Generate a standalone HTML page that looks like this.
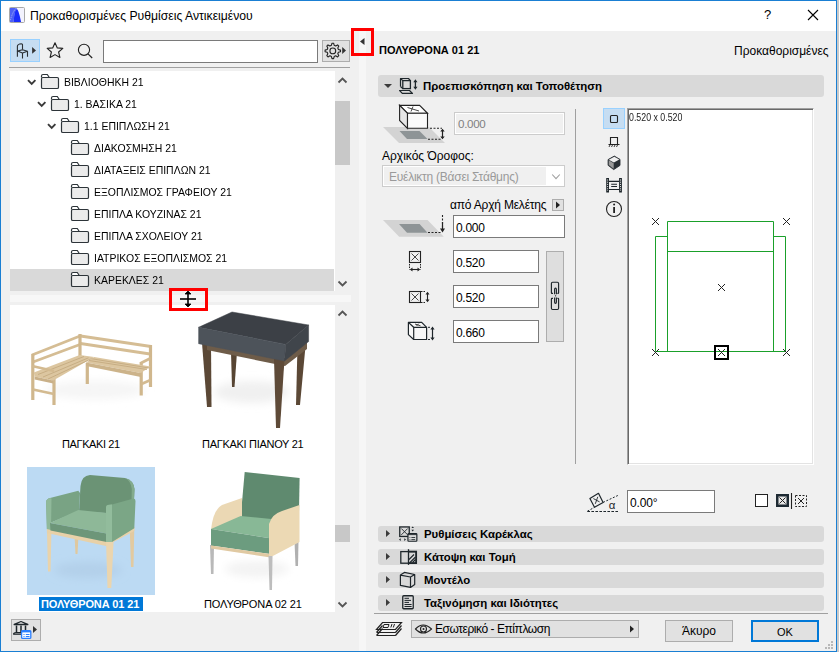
<!DOCTYPE html>
<html><head><meta charset="utf-8">
<style>
html,body{margin:0;padding:0}
body{width:839px;height:652px;position:relative;overflow:hidden;background:#c9c9c9;font-family:"Liberation Sans",sans-serif;color:#000}
.a{position:absolute}
.t{position:absolute;white-space:nowrap;font-size:12px;line-height:14px}
#win{position:absolute;left:0;top:0;width:837px;height:652px;box-sizing:border-box;border:1px solid #1a7fd3;background:#f0f0f0}
#title{position:absolute;left:1px;top:1px;width:835px;height:30px;background:#fff}
.tt{font-size:11px;transform:scaleX(0.95);transform-origin:0 0}
.lbl{font-size:11px;letter-spacing:-0.3px}
.hb{font-weight:bold;font-size:11.4px}
.num{letter-spacing:-0.3px}
.sel{background:#d9d9d9}
.fld{position:absolute;box-sizing:border-box;border:1px solid #7a7a7a;background:#fff}
.hdr{position:absolute;left:378px;width:446px;background:#d9d9d9;border-radius:3px}
.hdr .t{font-weight:bold;font-size:11px}
</style></head><body>
<div id="win"></div>
<div id="title"></div>
<!-- app icon -->
<svg class="a" style="left:9px;top:7px" width="16" height="16" viewBox="0 0 16 16">
  <rect x="0.5" y="0.5" width="15" height="15" rx="1" fill="#f3f3fe" stroke="#a9a9a9"/>
  <path d="M1 1H8Q5.5 4 4.6 15H1Z" fill="#4d60f5"/>
  <path d="M4.6 15Q5.5 2 7.9 2.1Q9.5 2.3 12.1 15Z" fill="#1a2dfb"/>
  <path d="M6.9 1.3Q3 6 1.2 14" fill="none" stroke="#a7b1f8" stroke-width="0.9" stroke-dasharray="1.2 0.8"/>
</svg>
<div class="t" style="left:30px;top:9px;font-size:12.2px;color:#000">Προκαθορισμένες Ρυθμίσεις Αντικειμένου</div>
<div class="t" style="left:764px;top:8px;font-size:13px">?</div>
<svg class="a" style="left:807px;top:9px" width="12" height="12" viewBox="0 0 12 12"><path d="M1 1L11 11M11 1L1 11" stroke="#000" stroke-width="1.1"/></svg>

<!-- LEFT TOOLBAR -->
<div class="a" style="left:10px;top:39px;width:30px;height:23px;box-sizing:border-box;background:#c6ddf2;border:1px solid #99d1ff"></div>
<svg class="a" style="left:14px;top:41px" width="26" height="20" viewBox="0 0 26 20">
 <path d="M3.4 15.7V5.1Q3.6 3 7.4 2.7Q8.5 2.8 8.5 3.6V8.6" fill="none" stroke="#2a2f33" stroke-width="1.1"/>
 <path d="M3.4 10.1L8.5 8.8L13.5 10.3L8.5 12Z" fill="none" stroke="#2a2f33" stroke-width="1.1" stroke-linejoin="round"/>
 <path d="M8.5 12V17.6M13.5 10.3V15.7" fill="none" stroke="#2a2f33" stroke-width="1.1"/>
 <path d="M18.1 6.1V12.8L22 9.5Z" fill="#333"/>
</svg>
<svg class="a" style="left:45px;top:41px" width="20" height="19" viewBox="0 0 20 19">
 <path d="M10 1.8L12.3 6.9L17.8 7.4L13.6 11L14.9 16.5L10 13.6L5.1 16.5L6.4 11L2.2 7.4L7.7 6.9Z" fill="none" stroke="#222" stroke-width="1.1" stroke-linejoin="round"/>
</svg>
<svg class="a" style="left:74px;top:40px" width="22" height="20" viewBox="0 0 22 20">
 <circle cx="10" cy="9.8" r="5.6" fill="none" stroke="#222" stroke-width="1.1"/>
 <path d="M14 13.8L18.2 18" stroke="#222" stroke-width="1.2"/>
</svg>
<div class="fld" style="left:103px;top:40px;width:215px;height:23px"></div>
<div class="a" style="left:322px;top:40px;width:28px;height:22px;box-sizing:border-box;background:#e1e1e1;border:1px solid #adadad"></div>
<svg class="a" style="left:322px;top:40px" width="28" height="22" viewBox="0 0 28 22">
 <path d="M10 3.2L11.6 3.2L12.2 5.3L13.7 6L15.6 4.9L16.8 6.1L15.8 8L16.4 9.5L18.5 10.1V11.7L16.4 12.3L15.8 13.8L16.8 15.7L15.6 16.9L13.7 15.8L12.2 16.5L11.6 18.6H10L9.4 16.5L7.9 15.8L6 16.9L4.8 15.7L5.8 13.8L5.2 12.3L3.1 11.7V10.1L5.2 9.5L5.8 8L4.8 6.1L6 4.9L7.9 6L9.4 5.3Z" fill="none" stroke="#222" stroke-width="1.1" stroke-linejoin="round"/>
 <circle cx="10.8" cy="10.9" r="2.9" fill="none" stroke="#222" stroke-width="1.1"/>
 <path d="M20.2 7V14L24 10.5Z" fill="#333"/>
</svg>
<div class="a" style="left:9px;top:67px;width:341px;height:1px;background:#a0a0a0"></div>
<!-- splitter stripe -->
<div class="a" style="left:359px;top:31px;width:7px;height:620px;background:#f6f6f6"></div>
<!-- red box top -->
<div class="a" style="left:351px;top:28px;width:23px;height:28px;box-sizing:border-box;border:3px solid #ff0000"></div>
<svg class="a" style="left:358px;top:36px" width="8" height="11" viewBox="0 0 8 11"><path d="M6.5 2V9L2 5.5Z" fill="#333"/></svg>
<div class="a" style="left:10px;top:71px;width:325px;height:220px;background:#fff"></div>
<div class="a sel" style="left:10px;top:269px;width:324px;height:22px"></div>
<svg class="a" style="left:27px;top:79px" width="10" height="7" viewBox="0 0 10 7"><path d="M1 1.2L4.7 4.9L8.4 1.2" fill="none" stroke="#3a3a3a" stroke-width="1.9"/></svg>
<svg class="a" style="left:40px;top:73px" width="20" height="17" viewBox="0 0 20 17"><path d="M1.5 4.5V3Q1.5 1.5 3 1.5H7.3L9.3 4.5" fill="#fff" stroke="#2d3439" stroke-width="1.2"/><rect x="1.5" y="4.5" width="17" height="11" rx="1.3" fill="#ebebeb" stroke="#2d3439" stroke-width="1.2"/></svg>
<div class="t tt" style="left:64px;top:75px">ΒΙΒΛΙΟΘΗΚΗ 21</div>
<svg class="a" style="left:37px;top:101px" width="10" height="7" viewBox="0 0 10 7"><path d="M1 1.2L4.7 4.9L8.4 1.2" fill="none" stroke="#3a3a3a" stroke-width="1.9"/></svg>
<svg class="a" style="left:50px;top:95px" width="20" height="17" viewBox="0 0 20 17"><path d="M1.5 4.5V3Q1.5 1.5 3 1.5H7.3L9.3 4.5" fill="#fff" stroke="#2d3439" stroke-width="1.2"/><rect x="1.5" y="4.5" width="17" height="11" rx="1.3" fill="#ebebeb" stroke="#2d3439" stroke-width="1.2"/></svg>
<div class="t tt" style="left:74px;top:97px">1. ΒΑΣΙΚΑ 21</div>
<svg class="a" style="left:47px;top:123px" width="10" height="7" viewBox="0 0 10 7"><path d="M1 1.2L4.7 4.9L8.4 1.2" fill="none" stroke="#3a3a3a" stroke-width="1.9"/></svg>
<svg class="a" style="left:60px;top:117px" width="20" height="17" viewBox="0 0 20 17"><path d="M1.5 4.5V3Q1.5 1.5 3 1.5H7.3L9.3 4.5" fill="#fff" stroke="#2d3439" stroke-width="1.2"/><rect x="1.5" y="4.5" width="17" height="11" rx="1.3" fill="#ebebeb" stroke="#2d3439" stroke-width="1.2"/></svg>
<div class="t tt" style="left:84px;top:119px">1.1 ΕΠΙΠΛΩΣΗ 21</div>
<svg class="a" style="left:70px;top:139px" width="20" height="17" viewBox="0 0 20 17"><path d="M1.5 4.5V3Q1.5 1.5 3 1.5H7.3L9.3 4.5" fill="#fff" stroke="#2d3439" stroke-width="1.2"/><rect x="1.5" y="4.5" width="17" height="11" rx="1.3" fill="#ebebeb" stroke="#2d3439" stroke-width="1.2"/></svg>
<div class="t tt" style="left:94px;top:141px">ΔΙΑΚΟΣΜΗΣΗ 21</div>
<svg class="a" style="left:70px;top:161px" width="20" height="17" viewBox="0 0 20 17"><path d="M1.5 4.5V3Q1.5 1.5 3 1.5H7.3L9.3 4.5" fill="#fff" stroke="#2d3439" stroke-width="1.2"/><rect x="1.5" y="4.5" width="17" height="11" rx="1.3" fill="#ebebeb" stroke="#2d3439" stroke-width="1.2"/></svg>
<div class="t tt" style="left:94px;top:163px">ΔΙΑΤΑΞΕΙΣ ΕΠΙΠΛΩΝ 21</div>
<svg class="a" style="left:70px;top:183px" width="20" height="17" viewBox="0 0 20 17"><path d="M1.5 4.5V3Q1.5 1.5 3 1.5H7.3L9.3 4.5" fill="#fff" stroke="#2d3439" stroke-width="1.2"/><rect x="1.5" y="4.5" width="17" height="11" rx="1.3" fill="#ebebeb" stroke="#2d3439" stroke-width="1.2"/></svg>
<div class="t tt" style="left:94px;top:185px">ΕΞΟΠΛΙΣΜΟΣ ΓΡΑΦΕΙΟΥ 21</div>
<svg class="a" style="left:70px;top:205px" width="20" height="17" viewBox="0 0 20 17"><path d="M1.5 4.5V3Q1.5 1.5 3 1.5H7.3L9.3 4.5" fill="#fff" stroke="#2d3439" stroke-width="1.2"/><rect x="1.5" y="4.5" width="17" height="11" rx="1.3" fill="#ebebeb" stroke="#2d3439" stroke-width="1.2"/></svg>
<div class="t tt" style="left:94px;top:207px">ΕΠΙΠΛΑ ΚΟΥΖΙΝΑΣ 21</div>
<svg class="a" style="left:70px;top:227px" width="20" height="17" viewBox="0 0 20 17"><path d="M1.5 4.5V3Q1.5 1.5 3 1.5H7.3L9.3 4.5" fill="#fff" stroke="#2d3439" stroke-width="1.2"/><rect x="1.5" y="4.5" width="17" height="11" rx="1.3" fill="#ebebeb" stroke="#2d3439" stroke-width="1.2"/></svg>
<div class="t tt" style="left:94px;top:229px">ΕΠΙΠΛΑ ΣΧΟΛΕΙΟΥ 21</div>
<svg class="a" style="left:70px;top:249px" width="20" height="17" viewBox="0 0 20 17"><path d="M1.5 4.5V3Q1.5 1.5 3 1.5H7.3L9.3 4.5" fill="#fff" stroke="#2d3439" stroke-width="1.2"/><rect x="1.5" y="4.5" width="17" height="11" rx="1.3" fill="#ebebeb" stroke="#2d3439" stroke-width="1.2"/></svg>
<div class="t tt" style="left:94px;top:251px">ΙΑΤΡΙΚΟΣ ΕΞΟΠΛΙΣΜΟΣ 21</div>
<svg class="a" style="left:70px;top:271px" width="20" height="17" viewBox="0 0 20 17"><path d="M1.5 4.5V3Q1.5 1.5 3 1.5H7.3L9.3 4.5" fill="#fff" stroke="#2d3439" stroke-width="1.2"/><rect x="1.5" y="4.5" width="17" height="11" rx="1.3" fill="#ebebeb" stroke="#2d3439" stroke-width="1.2"/></svg>
<div class="t tt" style="left:94px;top:273px">ΚΑΡΕΚΛΕΣ 21</div><!-- tree scrollbar -->
<div class="a" style="left:335px;top:101px;width:15px;height:64px;background:#c8c8c8"></div>
<svg class="a" style="left:337px;top:76px" width="11" height="9" viewBox="0 0 11 9"><path d="M1.5 6.5L5.5 2.5L9.5 6.5" fill="none" stroke="#555" stroke-width="1.8"/></svg>
<svg class="a" style="left:337px;top:279px" width="11" height="9" viewBox="0 0 11 9"><path d="M1.5 2.5L5.5 6.5L9.5 2.5" fill="none" stroke="#555" stroke-width="1.8"/></svg>
<!-- splitter -->
<div class="a" style="left:10px;top:295px;width:341px;height:7px;background:#f7f7f7"></div>
<!-- image area -->
<div class="a" style="left:10px;top:305px;width:325px;height:307px;background:#fff"></div>
<div class="a" style="left:335px;top:525px;width:15px;height:17px;background:#c8c8c8"></div>
<svg class="a" style="left:337px;top:309px" width="11" height="9" viewBox="0 0 11 9"><path d="M1.5 6.5L5.5 2.5L9.5 6.5" fill="none" stroke="#555" stroke-width="1.8"/></svg>
<svg class="a" style="left:337px;top:600px" width="11" height="9" viewBox="0 0 11 9"><path d="M1.5 2.5L5.5 6.5L9.5 2.5" fill="none" stroke="#555" stroke-width="1.8"/></svg>
<!-- red box splitter -->
<div class="a" style="left:169px;top:288px;width:39px;height:23px;box-sizing:border-box;border:3px solid #ff0000"></div>
<svg class="a" style="left:178px;top:289px" width="20" height="20" viewBox="0 0 20 20">
 <path d="M2 10H18" stroke="#000" stroke-width="1.6"/>
 <path d="M10 4V16" stroke="#000" stroke-width="1.6"/>
 <path d="M7 5L10 2L13 5Z M7 15L10 18L13 15Z" fill="#000" stroke="#000" stroke-width="0.8"/>
</svg>
<!-- selected image bg -->
<div class="a" style="left:27px;top:467px;width:128px;height:128px;background:#bcdaf3"></div>
<!-- labels -->
<div class="t lbl" style="left:62px;top:437px;letter-spacing:-0.4px">ΠΑΓΚΑΚΙ 21</div>
<div class="t lbl" style="left:202px;top:437px">ΠΑΓΚΑΚΙ ΠΙΑΝΟΥ 21</div>
<div class="a" style="left:39px;top:597px;width:104px;height:14px;background:#0078d7"></div>
<div class="t lbl" style="left:41px;top:597px;color:#fff;font-weight:bold;letter-spacing:-0.15px">ΠΟΛΥΘΡΟΝΑ 01 21</div>
<div class="t lbl" style="left:204px;top:597px;letter-spacing:-0.1px">ΠΟΛΥΘΡΟΝΑ 02 21</div>
<!-- library button -->
<div class="a" style="left:11px;top:619px;width:30px;height:22px;box-sizing:border-box;background:#e1e1e1;border:1px solid #adadad"></div>
<svg class="a" style="left:11px;top:619px" width="30" height="22" viewBox="0 0 30 22">
 <path d="M3.3 5.4L10 2.5L16.7 5.4Z" fill="#f0f0f0" stroke="#1e262b" stroke-width="1.2" stroke-linejoin="round"/>
 <path d="M2.8 5.6H17.2" stroke="#1e262b" stroke-width="1.3"/>
 <path d="M5.5 6.5V13.2M10 6.5V13.2M14.5 6.5V11" stroke="#1e262b" stroke-width="1.5"/>
 <path d="M2.5 15.1Q3 13.6 5 13.6H11" fill="none" stroke="#1e262b" stroke-width="1.4"/>
 <path d="M2.2 15.2H11" stroke="#1e262b" stroke-width="1.2"/>
 <rect x="10.6" y="11.6" width="9.2" height="7.8" rx="1" fill="#fff" stroke="#2a7fff" stroke-width="1.3"/>
 <path d="M10.5 12.6H19.9" stroke="#2a7fff" stroke-width="1.6"/>
 <path d="M12.5 15.5H13.5M14.8 15.5H18.5M12.5 17.5H13.5M14.8 17.5H18.5" stroke="#2a7fff" stroke-width="1.2"/>
 <path d="M22 7V13.9L26 10.5Z" fill="#333"/>
</svg>
<svg class="a" style="left:10px;top:305px" width="325" height="307" viewBox="10 305 325 307">
 <!-- bench -->
 <defs><filter id="blur" x="-50%" y="-50%" width="200%" height="200%"><feGaussianBlur stdDeviation="4"/></filter></defs>
 <g>
  <ellipse cx="95" cy="390" rx="50" ry="9" fill="#f5f5f5" filter="url(#blur)"/>
  <path d="M32 355L80 336M33 362L80 344.5M80.5 336L151 346.5M80.5 343.5L150 354" stroke="#d5bd94" stroke-width="2.8"/>
  <path d="M32.8 354V400M80 334V357M87.3 363V384M150.5 345V387M141.2 362V395.5M54 370V405" stroke="#d0b78d" stroke-width="3.2"/>
  <path d="M33.8 372.5L79.7 355L94.2 357L53.2 380.5L34.7 376.5Z" fill="#dcc6a0"/>
  <path d="M34.7 376.5L53.2 380.5L53.2 383.5L34.7 379.5Z" fill="#c9b088"/>
  <path d="M86.1 362.5L94.2 357L150.5 366.5L140.8 373Z" fill="#dcc6a0"/>
  <path d="M86.1 362.5L140.8 373L140.8 377L86.1 366Z" fill="#ccb38a"/>
  <path d="M38 374.5L84 356.5M43 377L88.5 357.8M48 379L92 358.5M89 360.5L147 369.5M92 358.8L149 368" stroke="#c2a77c" stroke-width="0.8"/>
  <path d="M32 366L54 371M141 363L151 358M33 389.5L54 394M141.5 384L150.5 380" stroke="#d3ba90" stroke-width="2.8"/>
 </g>
 <!-- piano stool -->
 <g>
  <ellipse cx="252" cy="392" rx="38" ry="11" fill="#f0f0f0" filter="url(#blur)"/>
  <path d="M202 343L211 343L211.5 407L207 407Z" fill="#5b4836"/>
  <path d="M231 352L237 352L234.5 387L232 387Z" fill="#574533"/>
  <path d="M297.5 346L305.5 346L300 405L296 405Z" fill="#5b4836"/>
  <path d="M207 343L285 358L307 342L307 349L285 366L207 350Z" fill="#6e5c49"/>
  <path d="M274 359L284.5 359L280 428L276 428Z" fill="#5e4a38"/>
  <path d="M198.6 327.3L232 312L308.6 325L285.7 344.4Z" fill="#3c4046" stroke="#3c4046" stroke-width="0.5"/>
  <path d="M198.6 327.3L285.7 344.4L284.5 361L198.6 343.7Z" fill="#4d535a" stroke="#4d535a" stroke-width="0.5"/>
  <path d="M285.7 344.4L308.6 325L308.6 341.6L284.5 361Z" fill="#40454b" stroke="#40454b" stroke-width="0.5"/>
 </g>
 <!-- armchair 1 -->
 <g>
  <ellipse cx="88" cy="570" rx="34" ry="8" fill="#b3d0ea" filter="url(#blur)"/>
  <path d="M46.9 529L51.5 529L50.5 571.5L48 571.5Z" fill="#e9d3ab"/>
  <path d="M74.5 535L78.5 535L77.5 554L75.5 554Z" fill="#dfc89f"/>
  <path d="M129.7 527L134.3 527L133.5 567L131 567Z" fill="#e2caa0"/>
  <path d="M46.9 528.5L106 541L134.3 527L134.3 531L106 546L46.9 533Z" fill="#e8d1a8"/>
  <path d="M106 541L113.6 541L111.3 588L107.5 588Z" fill="#ebd5ae"/>
  <path d="M79 512L80.5 486Q81.5 475.5 90 475L125 478Q133.5 480 134.5 489L134 500L106 513Z" fill="#6b9375"/>
  <path d="M125 478Q133.5 480 134.5 489L134 500L131.5 500L131.8 489Q131 481 125 478Z" fill="#83ab8c"/>
  <path d="M46.1 501.5Q46.5 499 50 498L78.3 490.8L80 493L79 511L50 523L46.9 529Z" fill="#79a384"/>
  <path d="M46.1 501.5Q46.5 499 50 498L51.5 498.5L51 530L46.9 529Z" fill="#90b99a"/>
  <path d="M50 523L78.3 510L107 513L106.5 533.5Z" fill="#8eb898"/>
  <path d="M50 523L106.5 533.5L106.5 542L50.5 530.6Z" fill="#6d9679"/>
  <path d="M106 507Q106.5 504.5 112 504.6L133.6 498.4Q135.5 498.5 135.5 501L134.3 528.3L112 542L106 542Z" fill="#7ba686"/>
  <path d="M106 507Q106.5 504.5 112 504.6L112 542L106 542Z" fill="#92bc9c"/>
 </g>
 <!-- armchair 2 -->
 <g>
  <ellipse cx="257" cy="569" rx="32" ry="8" fill="#f3f3f3" filter="url(#blur)"/>
  <path d="M210 545L214 545L213.5 574L211 574Z" fill="#b9b9b9"/>
  <path d="M294.5 541L298.5 541L298 566L295.5 566Z" fill="#b0b0b0"/>
  <path d="M244.7 472L299.6 478L299 512L276 521L240.6 518Z" fill="#5f8a6f"/>
  <path d="M211 530Q213 510 222 505L242 498L242 517L211 531Z" fill="#ebd8b4"/>
  <path d="M211 529L240.6 516L276.3 519.5L271.5 538.5Z" fill="#88b896"/>
  <path d="M211 529L271.5 538.5L270.3 554L211 545.6Z" fill="#6c9c7f"/>
  <path d="M211 545.6L270.3 554L270.3 557.5L211 548.5Z" fill="#e0c9a2"/>
  <path d="M269 524Q272 514 282 511L299.5 505L299.5 542L269 558Z" fill="#ecd9b4"/>
  <path d="M268.5 556L272.5 556L272 590L269.5 590Z" fill="#bdbdbd"/>
 </g>
</svg>
<!-- RIGHT PANEL -->
<div class="t" style="left:379px;top:43px;font-weight:bold;font-size:11px">ΠΟΛΥΘΡΟΝΑ 01 21</div>
<div class="t" style="left:734px;top:44px;font-size:12px">Προκαθορισμένες</div>
<!-- header 1 -->
<div class="hdr" style="top:75px;height:22px"></div>
<svg class="a" style="left:382px;top:81px" width="12" height="10" viewBox="0 0 12 10"><path d="M2 3H10L6 7Z" fill="#3c3c3c"/></svg>
<svg class="a" style="left:397px;top:76px" width="24" height="20" viewBox="0 0 24 20">
 <path d="M3.5 10.5V2.5H11.5L13.4 4.6" fill="none" stroke="#1e262b" stroke-width="1.2" stroke-linejoin="round"/>
 <path d="M3.5 2.5L5.8 4.6M3.5 10.5L5.8 12.6" stroke="#1e262b" stroke-width="1.2"/>
 <rect x="5.8" y="4.6" width="7.6" height="8" fill="#dadada" stroke="#1e262b" stroke-width="1.3"/>
 <path d="M2.6 14.5H12.5L15.5 17.4H5.3Z" fill="none" stroke="#1e262b" stroke-width="1.2" stroke-linejoin="round"/>
 <path d="M18.4 5V12" stroke="#1e262b" stroke-width="1.3"/>
 <path d="M16.3 6.3L18.4 3.3L20.5 6.3ZM16.3 10.7L18.4 13.7L20.5 10.7Z" fill="#1e262b"/>
</svg>
<div class="t hb" style="left:423px;top:79px">Προεπισκόπηση και Τοποθέτηση</div>
<!-- cube icon top -->
<svg class="a" style="left:380px;top:100px" width="70" height="46" viewBox="0 0 70 46">
 <path d="M3 27H49L65 43H19Z" fill="#d3d3d3"/>
 <path d="M19.5 31H39.5L47.5 39H27Z" fill="#8e9496"/>
 <path d="M19.6 5.4H39.6L47.5 13.3H27.5Z" fill="#fff" stroke="#222" stroke-width="1.1"/>
 <path d="M19.6 5.4V20.4L27.5 28.3V13.3Z" fill="#e6e6e6" stroke="#222" stroke-width="1.1"/>
 <path d="M27.5 13.3H47.5V28.3H27.5Z" fill="#fafafa" stroke="#222" stroke-width="1.1"/>
 <path d="M27.5 7.5L39 11M33 6.5L31 11.5" stroke="#333" stroke-width="0.9"/>
 <path d="M50 28.3H62M48 39.2H62" stroke="#222" stroke-width="1.1" stroke-dasharray="2 1.5"/>
 <path d="M62.5 30V38" stroke="#222" stroke-width="1.2"/>
 <path d="M60.3 31.5L62.5 28.8L64.7 31.5ZM60.3 36.5L62.5 39.2L64.7 36.5Z" fill="#222"/>
</svg>
<div class="a" style="left:454px;top:112px;width:111px;height:23px;box-sizing:border-box;border:1px solid #cccccc;background:#f0f0f0;box-shadow:inset 0 0 0 1px #fff"></div>
<div class="t" style="left:458px;top:117px;color:#808080;font-size:11.6px;letter-spacing:-0.3px">0.000</div>
<div class="t" style="left:382px;top:149px;font-size:12px">Αρχικός Όροφος:</div>
<div class="a" style="left:382px;top:165px;width:183px;height:22px;box-sizing:border-box;border:1px solid #cccccc;background:#fff"></div>
<div class="a" style="left:384px;top:167px;width:162px;height:18px;background:#f0f0f0"></div>
<svg class="a" style="left:551px;top:173px" width="10" height="8" viewBox="0 0 10 8"><path d="M1.2 1.5L5 5.6L8.8 1.5" fill="none" stroke="#a0a0a0" stroke-width="1.1"/></svg>
<div class="t" style="left:389px;top:170px;color:#9a9a9a;font-size:12px;letter-spacing:-0.25px">Ευέλικτη (Βάσει Στάθμης)</div>
<div class="t" style="left:450px;top:198px;font-size:12px;letter-spacing:-0.2px">από Αρχή Μελέτης</div>
<div class="a" style="left:552px;top:199px;width:12px;height:12px;box-sizing:border-box;border:1px solid #adadad;background:#e1e1e1"></div>
<svg class="a" style="left:552px;top:199px" width="12" height="12" viewBox="0 0 12 12"><path d="M4 2.5V9.5L8 6Z" fill="#222"/></svg>
<!-- plane icon -->
<svg class="a" style="left:380px;top:205px" width="70" height="36" viewBox="0 0 70 36">
 <path d="M3 15H47.5L63.8 31.7H19.2Z" fill="#d3d3d3"/>
 <path d="M19 19H39.6L47.5 27.7H27Z" fill="#8e9496"/>
 <path d="M48 27.5H62" stroke="#222" stroke-width="1.1" stroke-dasharray="2 1.5"/>
 <path d="M62.5 10V26" stroke="#222" stroke-width="1.1" stroke-dasharray="2 1.5"/>
 <path d="M62.5 17V25" stroke="#222" stroke-width="1.2"/>
 <path d="M60 23.5L62.5 27.5L65 23.5Z" fill="#222"/>
</svg>
<div class="fld" style="left:453px;top:215px;width:112px;height:23px"></div>
<div class="t num" style="left:456px;top:221px;font-size:12px">0.000</div>
<!-- size fields -->
<div class="fld" style="left:453px;top:250px;width:86px;height:23px"></div>
<div class="t num" style="left:456px;top:256px;font-size:12px">0.520</div>
<div class="fld" style="left:453px;top:285px;width:86px;height:23px"></div>
<div class="t num" style="left:456px;top:291px;font-size:12px">0.520</div>
<div class="fld" style="left:453px;top:320px;width:86px;height:23px"></div>
<div class="t num" style="left:456px;top:326px;font-size:12px">0.660</div>
<div class="a" style="left:546px;top:251px;width:18px;height:91px;box-sizing:border-box;border:1px solid #adadad;background:#dedede"></div>
<svg class="a" style="left:546px;top:281px" width="18" height="32" viewBox="0 0 18 32">
 <g fill="none" stroke="#1e262b" stroke-width="1.15">
 <path d="M7 12.3H5.9Q5.4 12.3 5.4 11.7V2.4Q5.4 1.2 6.6 1.2H11.4Q12.6 1.2 12.6 2.4V11.7Q12.6 12.3 12 12.3H11.4"/>
 <path d="M7 17.4H5.9Q5.4 17.4 5.4 18V27.3Q5.4 28.5 6.6 28.5H11.4Q12.6 28.5 12.6 27.3V18Q12.6 17.4 12 17.4H11.4"/>
 <path d="M8.6 13.2V8.4Q8.6 7.1 9.5 7.1Q10.4 7.1 10.4 8.4V13.2"/>
 <path d="M8.6 16.6V21.1Q8.6 22.4 9.5 22.4Q10.4 22.4 10.4 21.1V16.6"/>
 </g>
 <rect x="9" y="14.3" width="1.1" height="1.1" fill="#1e262b"/>
</svg>
<!-- size icons -->
<svg class="a" style="left:405px;top:248px" width="32" height="96" viewBox="0 0 32 96">
 <rect x="4.5" y="3.5" width="11" height="11" fill="none" stroke="#222" stroke-width="1.1"/>
 <path d="M6.5 5.5L13.5 12.5M13.5 5.5L6.5 12.5" stroke="#333" stroke-width="0.9"/>
 <path d="M4.5 16V21.5M15.5 16V21.5" stroke="#222" stroke-width="1" stroke-dasharray="1.5 1"/>
 <path d="M6 21.5H14" stroke="#222" stroke-width="1.1"/>
 <path d="M7.5 19.5L4.8 21.5L7.5 23.5ZM12.5 19.5L15.2 21.5L12.5 23.5Z" fill="#222"/>
 <rect x="4.5" y="43.5" width="11" height="11" fill="none" stroke="#222" stroke-width="1.1"/>
 <path d="M6.5 45.5L13.5 52.5M13.5 45.5L6.5 52.5" stroke="#333" stroke-width="0.9"/>
 <path d="M16 43.5H21M16 54.5H21" stroke="#222" stroke-width="1" stroke-dasharray="1.5 1"/>
 <path d="M22.5 45V53" stroke="#222" stroke-width="1.1"/>
 <path d="M20.5 46.5L22.5 43.8L24.5 46.5ZM20.5 51.5L22.5 54.2L24.5 51.5Z" fill="#222"/>
 <path d="M3.4 74.4H16.7L21.6 79.3V91.5H8.7L3.4 86.6Z" fill="#f7f7f7" stroke="#1e262b" stroke-width="1.2" stroke-linejoin="round"/>
 <path d="M3.4 74.4L8.7 79.3H21.6M8.7 79.3V91.5" fill="none" stroke="#1e262b" stroke-width="1.2"/>
 <path d="M10 76L15.5 77.8M13.8 75.6L11.5 78" stroke="#333" stroke-width="0.9"/>
 <path d="M23 79.3H25M23 91.5H25" stroke="#1e262b" stroke-width="1"/>
 <path d="M27.5 81V90" stroke="#1e262b" stroke-width="1.2"/>
 <path d="M25.4 81.5L27.5 78.6L29.6 81.5ZM25.4 89.5L27.5 92.4L29.6 89.5Z" fill="#1e262b"/>
</svg>
<!-- vertical separator -->
<div class="a" style="left:575px;top:109px;width:1px;height:355px;background:#a0a0a0"></div>
<!-- icon buttons -->
<div class="a" style="left:603px;top:108px;width:22px;height:21px;box-sizing:border-box;background:#c6ddf2;border:1px solid #99d1ff"></div>
<svg class="a" style="left:603px;top:108px" width="22" height="114" viewBox="0 0 22 114">
 <rect x="7.5" y="7.5" width="7" height="7" rx="1" fill="none" stroke="#222" stroke-width="1.1"/>
 <path d="M7.5 36V29.5H14.5V36M5.5 36.5H16.5" fill="none" stroke="#222" stroke-width="1.1"/>
 <path d="M6 39L7 37M8.5 39L9.5 37M11 39L12 37M13.5 39L14.5 37" stroke="#222" stroke-width="0.9"/>
 <path d="M11.3 48.1L17 51.4V57.4L10.7 61.6L5.1 57.3V51.6Z" fill="#2a3035" stroke="#2a3035" stroke-width="0.9" stroke-linejoin="round"/>
 <path d="M11.3 48.8L16.3 51.6L10.9 54.6L5.8 51.8Z" fill="#efefef"/>
 <path d="M5.8 52.3L10.7 55.2V60.8L5.8 57Z" fill="#9a9a9a"/>
 <path d="M4.6 70V84.6M17.5 70V84.6" stroke="#1e262b" stroke-width="2.8"/>
 <path d="M4.6 71.5V83M17.5 71.5V83" stroke="#f0f0f0" stroke-width="1" stroke-dasharray="1 1.2"/>
 <path d="M6 73.4H16M6 81.5H16" stroke="#1e262b" stroke-width="1.1"/>
 <path d="M8.2 76.2H14M8.2 78.5H14" stroke="#1e262b" stroke-width="1.1"/>
 <circle cx="11" cy="101" r="7.5" fill="none" stroke="#222" stroke-width="1.1"/>
 <rect x="10.2" y="99" width="1.8" height="6" fill="#222"/>
 <circle cx="11.1" cy="96.5" r="1" fill="#222"/>
</svg>
<!-- preview box -->
<div class="a" style="left:627px;top:108px;width:187px;height:357px;box-sizing:border-box;background:#fff;border-left:1px solid #a0a0a0;border-top:1px solid #a0a0a0;border-right:1px solid #fff;border-bottom:1px solid #fff;box-shadow:inset 1px 1px 0 #696969,inset -1px -1px 0 #e3e3e3"></div>
<div class="t" style="left:629px;top:112px;font-size:10px;line-height:11px;color:#222;transform:scaleX(0.88);transform-origin:0 0">0.520 x 0.520</div>
<svg class="a" style="left:627px;top:108px" width="187" height="356" viewBox="627 108 187 356">
 <g fill="none" stroke="#1aa02a" stroke-width="1">
  <path d="M667.5 351.5V221.5H773.5V351.5"/>
  <path d="M667.5 251.5H773.5"/>
  <path d="M655.5 351.5V236.5H667.5"/>
  <path d="M785.5 351.5V236.5H773.5"/>
  <path d="M655.5 351.5H785.5"/>
 </g>
 <g fill="none" stroke="#222" stroke-width="1">
  <path d="M652 218L659 225M659 218L652 225"/>
  <path d="M783 218L790 225M790 218L783 225"/>
  <path d="M718 284L725 291M725 284L718 291"/>
  <path d="M652 349L659 356M659 349L652 356"/>
  <path d="M783 349L790 356M790 349L783 356"/>
  <path d="M718 349L725 356M725 349L718 356"/>
 </g>
 <rect x="715" y="346" width="13" height="13" fill="none" stroke="#000" stroke-width="2"/>
</svg>
<!-- angle -->
<svg class="a" style="left:585px;top:487px" width="40" height="28" viewBox="0 0 40 28">
 <path d="M13.5 6.3L18.1 15.4L9.5 20.3L4.9 11.5Z" fill="none" stroke="#1e262b" stroke-width="1.2" stroke-linejoin="round"/>
 <path d="M8.4 11.6L14.6 14.9M12.8 9.8L10.3 16.8" stroke="#1e262b" stroke-width="0.9"/>
 <path d="M2.4 24.2L9.5 20.3M18.1 15.4L32.8 8.5" stroke="#1e262b" stroke-width="1" stroke-dasharray="2 1.6"/>
 <path d="M2.4 24.5H33.1" stroke="#1e262b" stroke-width="1.2" stroke-dasharray="2.6 1.4"/>
 <text x="23.8" y="22.2" font-family="Liberation Sans" font-size="11.5" fill="#1e262b">α</text>
</svg>
<div class="fld" style="left:627px;top:490px;width:88px;height:23px"></div>
<div class="t" style="left:630px;top:496px;font-size:12px;letter-spacing:-0.15px">0.00°</div>
<div class="a" style="left:755px;top:494px;width:13px;height:13px;box-sizing:border-box;border:1px solid #222;background:#fff"></div>
<svg class="a" style="left:774px;top:492px" width="36" height="18" viewBox="0 0 36 18">
 <rect x="3.25" y="3.25" width="10.5" height="10.5" fill="#e8e8e8" stroke="#1e2a33" stroke-width="2.5"/>
 <path d="M5.5 5.5L11.5 11.5M11.5 5.5L5.5 11.5" stroke="#222" stroke-width="1"/>
 <path d="M17.5 1V17" stroke="#222" stroke-width="1.1"/>
 <rect x="21.5" y="3.5" width="11" height="11" fill="none" stroke="#222" stroke-width="1" stroke-dasharray="2 1.5"/>
 <path d="M24 6L30 12M30 6L24 12" stroke="#222" stroke-width="1"/>
</svg>
<!-- bottom headers -->
<div class="hdr" style="top:526px;height:16px"></div>
<div class="hdr" style="top:549px;height:16px"></div>
<div class="hdr" style="top:572px;height:16px"></div>
<div class="hdr" style="top:595px;height:16px"></div>
<svg class="a" style="left:384px;top:526px" width="10" height="85" viewBox="0 0 10 85">
 <path d="M2 4V11L6 7.5Z M2 27V34L6 30.5Z M2 50V57L6 53.5Z M2 73V80L6 76.5Z" fill="#3c3c3c"/>
</svg>
<svg class="a" style="left:397px;top:524px" width="24" height="88" viewBox="0 0 24 88">
 <g stroke="#1e262b" fill="none">
 <rect x="2.75" y="2.95" width="9.5" height="9.5" stroke-width="1.3"/>
 <path d="M4.3 4.5L10.7 10.9M10.7 4.5L4.3 10.9" stroke-width="0.9"/>
 <rect x="10.95" y="9.65" width="8.9" height="7.6" rx="0.8" fill="#d9d9d9" stroke-width="1.2"/>
 <path d="M11 10.6H19.8" stroke-width="0.9"/>
 <path d="M12.6 13.5H13.3M14.4 13.5H18.2M12.6 15.6H13.3M14.4 15.6H18.2" stroke-width="0.85"/>
 <rect x="3.8" y="27.6" width="15.4" height="11.6" stroke-width="1.3"/>
 <path d="M11.5 27.6H19.2V39.2H11.5" stroke-width="1.7"/>
 <path d="M12 35.5L17 30.5M13 38.5L18.5 33M15.5 38.5L18.5 35.5" stroke-width="1.1"/>
 <path d="M11.5 25.2V40.9" stroke-width="1.3"/>
 <path d="M3.4 51.1L13.5 53V63.4L3.4 61.4Z M3.4 51.1L7.4 48.4L17.7 50.5L13.5 53M17.7 50.5V60.5L13.5 63.4" stroke-width="1.2" stroke-linejoin="round"/>
 <rect x="5.75" y="71.75" width="10.5" height="13" rx="1" stroke-width="1.3"/>
 <path d="M7.5 74.3H12M7.5 76.4H14M7.5 78.4H12M7.5 80.5H14.6M7.5 82.5H14.6" stroke-width="1"/>
 </g>
 <path d="M14.4 4.1L15.7 2.4L17 4.1ZM14.4 5.7L15.7 7.4L17 5.7Z" fill="#1e262b"/>
 <path d="M2 15.6L3.7 14.2V17ZM9 15.6L7.3 14.2V17Z" fill="#1e262b"/>
</svg>
<div class="t hb" style="left:424px;top:527px">Ρυθμίσεις Καρέκλας</div>
<div class="t hb" style="left:424px;top:550px">Κάτοψη και Τομή</div>
<div class="t hb" style="left:424px;top:573px">Μοντέλο</div>
<div class="t hb" style="left:424px;top:596px">Ταξινόμηση και Ιδιότητες</div>
<!-- bottom bar -->
<div class="a" style="left:374px;top:613px;width:454px;height:1px;background:#a0a0a0"></div>
<svg class="a" style="left:374px;top:619px" width="30" height="20" viewBox="0 0 30 20">
 <path d="M2.5 10.5L8.5 3.5H27.5L21.5 10.5Z" fill="#f0f0f0" stroke="#222" stroke-width="1.2"/>
 <path d="M2.5 13.5L8.5 6.5M21.5 13.5L27.5 6.5M2.5 13.5H21.5" fill="none" stroke="#222" stroke-width="1.2"/>
 <path d="M2.5 16.5L8.5 9.5M21.5 16.5L27.5 9.5M2.5 16.5H21.5" fill="none" stroke="#222" stroke-width="1.2"/>
 <path d="M10 5.5H15L14 8.5H9Z" fill="none" stroke="#222" stroke-width="1"/>
 <path d="M18 5L16.8 8.5M20.5 5L19.3 8.5" stroke="#222" stroke-width="1"/>
</svg>
<div class="a" style="left:411px;top:620px;width:228px;height:18px;box-sizing:border-box;border:1px solid #adadad;background:#e1e1e1"></div>
<svg class="a" style="left:414px;top:622px" width="20" height="14" viewBox="0 0 20 14">
 <path d="M1.5 7Q9 -1 17.5 7Q9 15 1.5 7Z" fill="none" stroke="#222" stroke-width="1.1"/>
 <circle cx="9.5" cy="7" r="3" fill="none" stroke="#222" stroke-width="1.1"/>
 <circle cx="9.5" cy="7" r="1" fill="#222"/>
</svg>
<div class="t" style="left:435px;top:622px;font-size:12px;letter-spacing:-0.45px">Εσωτερικό - Επίπλωση</div>
<svg class="a" style="left:628px;top:623px" width="8" height="12" viewBox="0 0 8 12"><path d="M2 2.5V9.5L6 6Z" fill="#222"/></svg>
<div class="a" style="left:665px;top:620px;width:68px;height:22px;box-sizing:border-box;border:1px solid #adadad;background:#e1e1e1"></div>
<div class="t" style="left:665px;top:624px;width:68px;text-align:center;font-size:12px">Άκυρο</div>
<div class="a" style="left:751px;top:620px;width:68px;height:22px;box-sizing:border-box;border:2px solid #0078d7;background:#e1e1e1"></div>
<div class="t" style="left:751px;top:625px;width:68px;text-align:center;font-size:11px">OK</div>
<svg class="a" style="left:824px;top:640px" width="10" height="10" viewBox="0 0 10 10"><path d="M7 1h2v2h-2zM4 4h2v2h-2zM7 4h2v2h-2zM1 7h2v2h-2zM4 7h2v2h-2zM7 7h2v2h-2z" fill="#b8b8b8"/></svg>

</body></html>
